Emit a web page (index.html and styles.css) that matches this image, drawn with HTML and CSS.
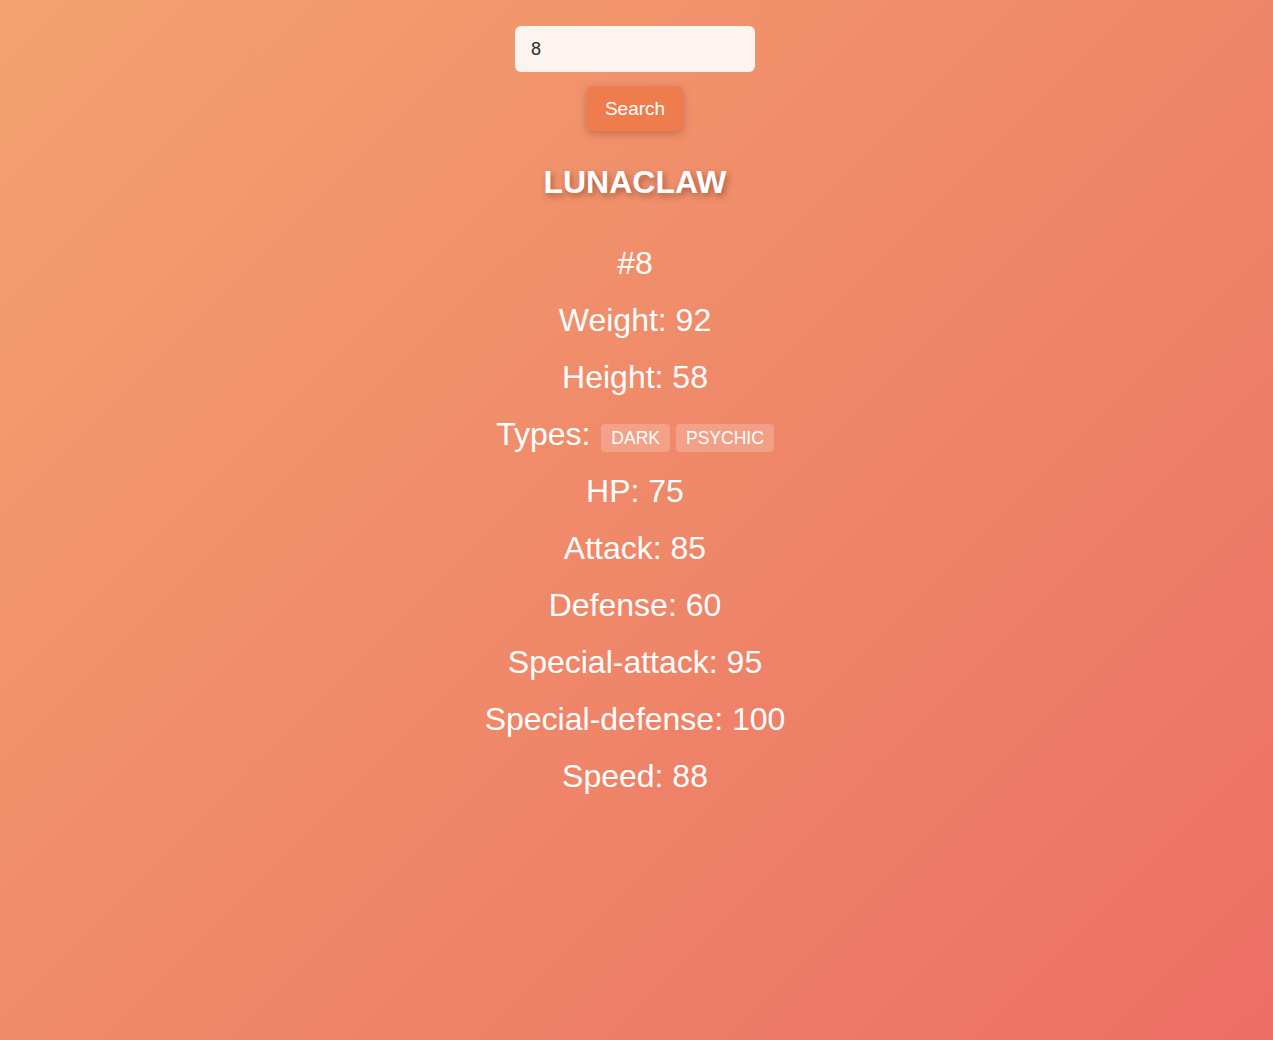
FILE: index.html
```html
<!DOCTYPE html>
<html lang="en">
<head>
<meta charset="utf-8">
<title>Pokemon Search</title>
<link rel="stylesheet" href="styles.css">
</head>
<body>
<main class="app">
  <form class="search">
    <input class="search-input" type="text" value="8">
    <button class="search-btn" type="button">Search</button>
  </form>
  <h1 class="name">LUNACLAW</h1>
  <div class="stats">
    <p class="stat">#8</p>
    <p class="stat">Weight: 92</p>
    <p class="stat">Height: 58</p>
    <p class="stat">Types: <span class="type">DARK</span><span class="type">PSYCHIC</span></p>
    <p class="stat">HP: 75</p>
    <p class="stat">Attack: 85</p>
    <p class="stat">Defense: 60</p>
    <p class="stat">Special-attack: 95</p>
    <p class="stat">Special-defense: 100</p>
    <p class="stat">Speed: 88</p>
  </div>
</main>
</body>
</html>
```
FILE: styles.css
```css
html, body {
  margin: 0;
  padding: 0;
  min-height: 100%;
}
body {
  min-height: 1040px;
  background: linear-gradient(135deg, #f3a26f 0%, #ec6f64 100%);
  font-family: "Liberation Sans", Arial, Helvetica, sans-serif;
  color: #fff;
}
.app {
  display: flex;
  flex-direction: column;
  align-items: center;
  padding-top: 26px;
  padding-right: 3px;
}
.search {
  display: flex;
  flex-direction: column;
  align-items: center;
  gap: 14px;
}
.search-input {
  box-sizing: border-box;
  width: 240px;
  height: 46px;
  border: none;
  border-radius: 6px;
  background: #fdf3ef;
  padding: 0 16px;
  font-family: inherit;
  font-size: 18px;
  color: #2b2b2b;
  outline: none;
}
.search-btn {
  box-sizing: border-box;
  height: 45px;
  width: 96px;
  border: none;
  border-radius: 6px;
  background: #ef7c4d;
  color: #fff;
  font-family: inherit;
  font-size: 19px;
  box-shadow: 0 3px 8px rgba(120, 50, 30, 0.35);
}
.name {
  margin: 33px 0 0;
  font-size: 32px;
  line-height: 37px;
  font-weight: bold;
  text-shadow: 2px 3px 6px rgba(80, 30, 20, 0.45);
}
.stats {
  display: flex;
  flex-direction: column;
  align-items: center;
  gap: 20px;
  margin-top: 44px;
}
.stat {
  margin: 0;
  font-size: 32px;
  line-height: 37px;
  text-align: center;
}
.type {
  display: inline-block;
  vertical-align: middle;
  position: relative;
  top: 1px;
  margin-left: 6px;
  padding: 0 10px;
  height: 28px;
  line-height: 28px;
  font-size: 17.5px;
  border-radius: 4px;
  background: rgba(255, 255, 255, 0.2);
}
.type:first-child {
  margin-left: 2px;
}
```
